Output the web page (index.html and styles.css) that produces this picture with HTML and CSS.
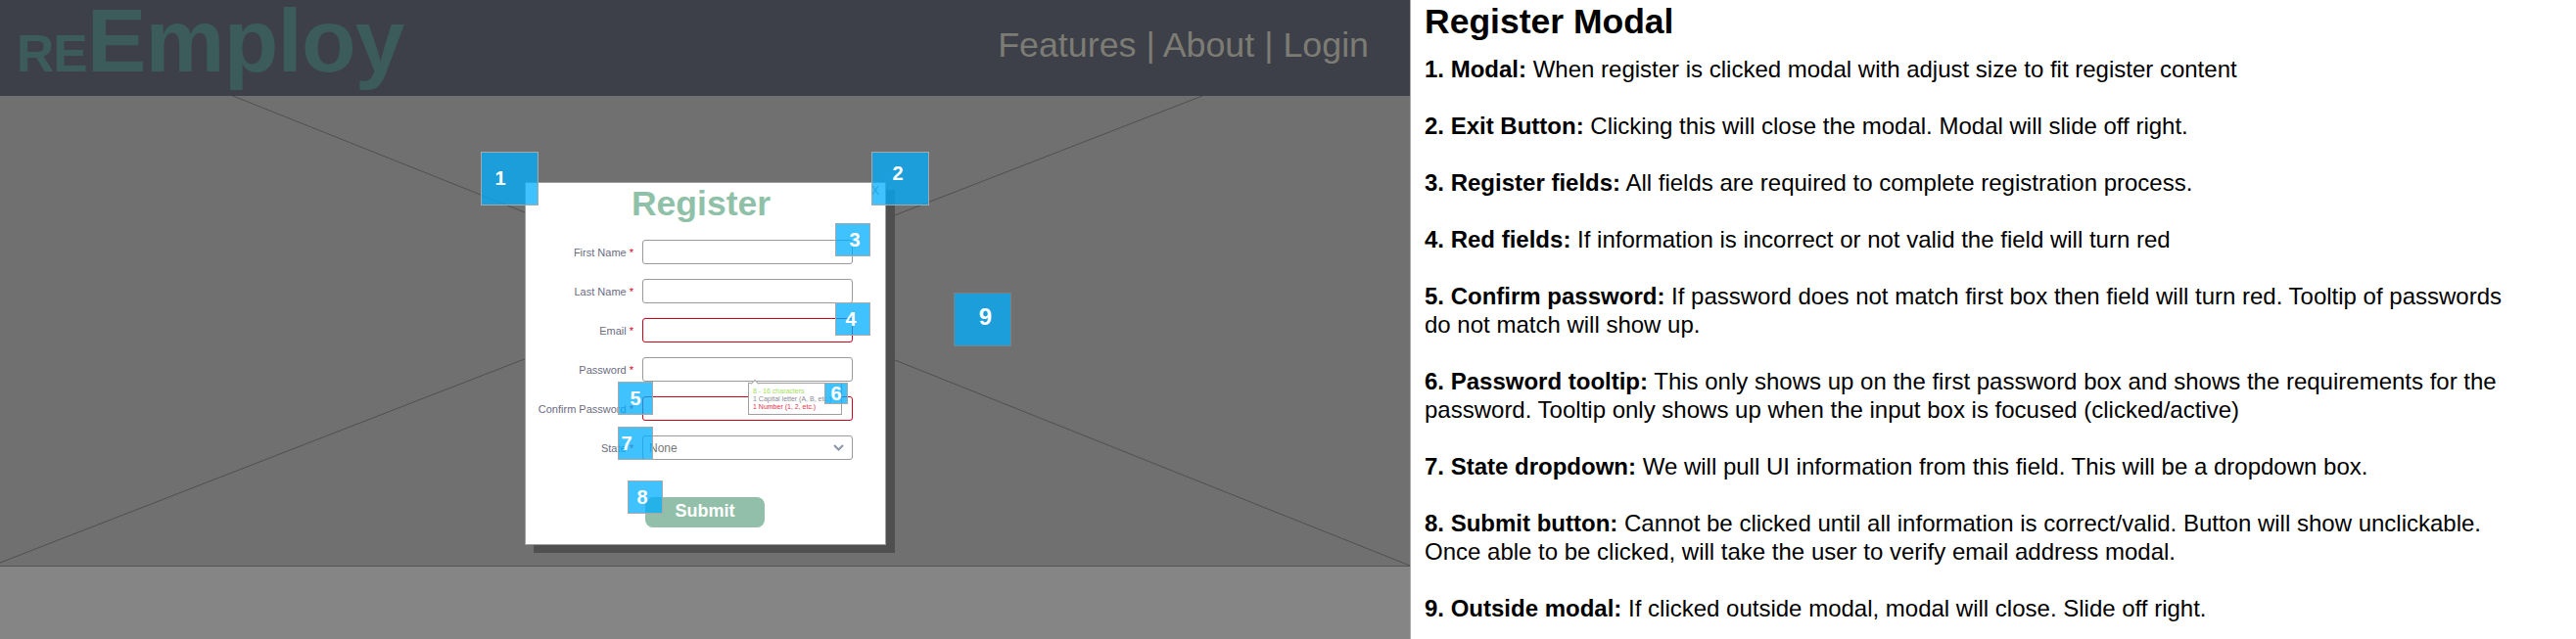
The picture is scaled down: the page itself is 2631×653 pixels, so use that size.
FILE: index.html
```html
<!DOCTYPE html>
<html lang="en">
  <head>
    <meta charset="UTF-8" />
    <title>Register Modal</title>
    <link rel="stylesheet" href="styles.css">
  </head>
  <body>
    <div class="stage">
      <header class="topbar">
        <div class="logo"><span class="logo-small">RE</span>Employ</div>
        <nav class="nav">Features | About | Login</nav>
      </header>
      <main class="hero"></main>
      <footer class="foot"></footer>

      <svg class="cross" viewBox="0 0 1440 653" width="1440" height="653">
        <line x1="0" y1="3" x2="1440" y2="578" />
        <line x1="0" y1="575" x2="1228" y2="98" />
      </svg>

      <div class="modal">
        <span class="close">X</span>
        <h1 class="modal-title">Register</h1>
        <form class="form">
          <label class="label">First Name <em>*</em></label>
          <div class="field"></div>
          <label class="label">Last Name <em>*</em></label>
          <div class="field"></div>
          <label class="label">Email <em>*</em></label>
          <div class="field field-bad"></div>
          <label class="label">Password <em>*</em></label>
          <div class="field"></div>
          <label class="label">Confirm Password <em>*</em></label>
          <div class="field field-bad"></div>
          <label class="label">State <em>*</em></label>
          <div class="field field-select">
            <span>None</span>
            <svg width="11" height="7" viewBox="0 0 11 7"><path d="M1 1l4.500 4.500L10 1" /></svg>
          </div>
        </form>
        <div class="submit">Submit</div>
      </div>

      <div class="tooltip">
        <div class="tip-ok">8 - 16 characters</div>
        <div class="tip-neutral">1 Capital letter (A, B, etc.)</div>
        <div class="tip-bad">1 Number (1, 2, etc.)</div>
      </div>

      <div class="badge badge-1">1</div>
      <div class="badge badge-2">2</div>
      <div class="badge badge-3">3</div>
      <div class="badge badge-4">4</div>
      <div class="badge badge-5">5</div>
      <div class="badge badge-6">6</div>
      <div class="badge badge-7">7</div>
      <div class="badge badge-8">8</div>
      <div class="badge badge-9">9</div>
    </div>

    <section class="notes">
      <h2>Register Modal</h2>
      <p><strong>1. Modal:</strong> When register is clicked modal with adjust size to fit register content</p>
      <p><strong>2. Exit Button:</strong> Clicking this will close the modal. Modal will slide off right.</p>
      <p><strong>3. Register fields:</strong> All fields are required to complete registration process.</p>
      <p><strong>4. Red fields:</strong> If information is incorrect or not valid the field will turn red</p>
      <p><strong>5. Confirm password:</strong> If password does not match first box then field will turn red. Tooltip of passwords do not match will show up.</p>
      <p><strong>6. Password tooltip:</strong> This only shows up on the first password box and shows the requirements for the password. Tooltip only shows up when the input box is focused (clicked/active)</p>
      <p><strong>7. State dropdown:</strong> We will pull UI information from this field. This will be a dropdown box.</p>
      <p><strong>8. Submit button:</strong> Cannot be clicked until all information is correct/valid. Button will show unclickable. Once able to be clicked, will take the user to verify email address modal.</p>
      <p><strong>9. Outside modal:</strong> If clicked outside modal, modal will close. Slide off right.</p>
    </section>
  </body>
</html>
```

FILE: styles.css
```css
* {
  box-sizing: border-box;
}

body {
  margin: 0;
  height: 653px;
  display: flex;
  overflow: hidden;
  font-family: "Liberation Sans", Arial, sans-serif;
  background: #fff;
  color: #000;
}

.stage {
  position: relative;
  flex: 0 0 1441px;
  height: 653px;
  border-right: 1px solid #aaa;
  display: flex;
  flex-direction: column;
  overflow: hidden;
}

.topbar {
  position: relative;
  z-index: 1;
  flex: 0 0 98px;
  display: flex;
  justify-content: space-between;
  padding: 0 42px 0 17px;
  background: #3e4049;
  overflow: hidden;
}

.logo {
  font-size: 91px;
  line-height: 83px;
  font-weight: bold;
  letter-spacing: -0.800px;
  color: #3c5c5c;
}

.logo-small {
  font-size: 53px;
  letter-spacing: -1px;
}

.nav {
  padding-top: 26px;
  font-size: 35.800px;
  line-height: 40px;
  color: #7c7c74;
}

.hero {
  flex: 0 0 481px;
  background: #707070;
  border-bottom: 1px solid #555;
}

.foot {
  flex: 1;
  background: #858585;
}

.cross {
  position: absolute;
  left: 0;
  top: 0;
}

.cross line {
  stroke: #505050;
  stroke-width: 1;
}

.modal {
  position: absolute;
  z-index: 2;
  left: 536px;
  top: 186px;
  width: 369px;
  padding-bottom: 17px;
  background: #fff;
  border: 1px solid #a0a0a0;
  box-shadow: 9px 8px 0 #4f4f4f;
}

.close {
  position: absolute;
  left: 353px;
  top: 1px;
  font-size: 12px;
  color: #888;
}

.modal-title {
  margin: 1px 0 17px;
  padding-right: 9px;
  text-align: center;
  font-size: 35.500px;
  line-height: 40px;
  color: #8fc1a9;
}

.form {
  display: grid;
  grid-template-columns: 110px 215px;
  grid-auto-rows: 25px;
  gap: 15px 9px;
}

.label {
  align-self: center;
  text-align: right;
  white-space: nowrap;
  font-size: 11px;
  color: #6b6b80;
}

.label em {
  font-style: normal;
  color: #d0021b;
}

.field {
  border: 1px solid #9a9a9a;
  border-radius: 3px;
  background: #fff;
}

.field-bad {
  border-color: #d0021b;
}

.field-select {
  display: flex;
  align-items: center;
  justify-content: space-between;
  padding: 0 8px 0 6px;
  font-size: 12px;
  color: #777;
}

.field-select svg {
  fill: none;
  stroke: #8a96a8;
  stroke-width: 2;
}

.submit {
  width: 122px;
  height: 31px;
  margin: 38px 0 0 122px;
  border-radius: 8px;
  background: #91bfa9;
  color: #fff;
  text-align: center;
  font-size: 18px;
  font-weight: bold;
  line-height: 29px;
}

.tooltip {
  position: absolute;
  z-index: 2;
  left: 764px;
  top: 391px;
  width: 96px;
  height: 33px;
  padding: 4px 0 0 4px;
  background: #fff;
  border: 1px solid #a0a0a0;
  font-size: 7px;
  line-height: 8px;
  white-space: nowrap;
}

.tooltip::before {
  content: "";
  position: absolute;
  left: 3px;
  top: -3px;
  width: 5px;
  height: 5px;
  background: #fff;
  border-left: 1px solid #a0a0a0;
  border-top: 1px solid #a0a0a0;
  transform: rotate(45deg);
}

.tip-ok {
  color: #a3e05a;
}

.tip-neutral {
  color: #8a8a9a;
}

.tip-bad {
  color: #e0304a;
}

.badge {
  position: absolute;
  z-index: 3;
  display: flex;
  align-items: center;
  justify-content: center;
  width: 36px;
  height: 34px;
  background: rgba(0, 174, 255, 0.75);
  border: 1px solid #a8a8a8;
  color: #fff;
  font-size: 20px;
  font-weight: bold;
}

.badge-1 {
  left: 491px;
  top: 155px;
  width: 59px;
  height: 55px;
  padding-right: 19px;
}

.badge-2 {
  left: 890px;
  top: 155px;
  width: 59px;
  height: 55px;
  padding: 0 5px 11px 0;
}

.badge-3 {
  left: 853px;
  top: 228px;
  padding-left: 4px;
}

.badge-4 {
  left: 853px;
  top: 309px;
  padding-right: 4px;
}

.badge-5 {
  left: 631px;
  top: 390px;
}

.badge-6 {
  left: 842px;
  top: 391px;
  width: 24px;
  height: 22px;
}

.badge-7 {
  left: 631px;
  top: 436px;
  padding-right: 18px;
}

.badge-8 {
  left: 641px;
  top: 491px;
  padding-right: 6px;
}

.badge-9 {
  left: 974px;
  top: 299px;
  width: 59px;
  height: 55px;
  padding: 0 0 5px 6px;
  border-color: #808080;
  font-size: 24px;
}

.notes {
  flex: 1;
  padding: 0 0 0 14px;
  max-width: 1130px;
  font-size: 24px;
  line-height: 29px;
}

.notes h2 {
  margin: 4px 0 16px;
  font-size: 35.500px;
  line-height: 36px;
}

.notes p {
  margin: 0 0 29px;
}
```
